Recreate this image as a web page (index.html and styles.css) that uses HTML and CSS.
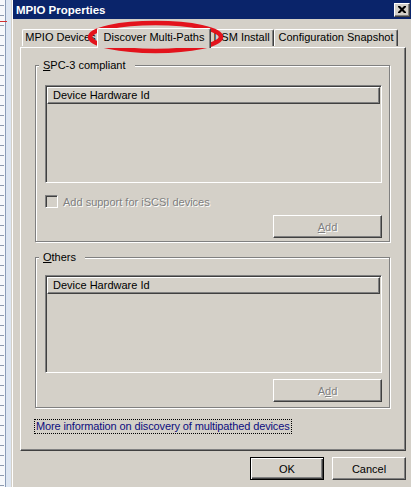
FILE: index.html
```html
<!DOCTYPE html>
<html>
<head>
<meta charset="utf-8">
<title>MPIO Properties</title>
<link rel="stylesheet" href="styles.css">
</head>
<body>
<div class="screen">
  <div class="ruler"><span class="ruler-mark"></span></div>
  <div class="dialog">
    <div class="titlebar">
      <span class="title">MPIO Properties</span>
      <span class="close">
        <svg width="8" height="7" viewBox="0 0 8 7"><path d="M0 0h2l2 2 2-2h2v1l-2.5 2.5L8 6v1H6L4 5 2 7H0V6l2.5-2.5L0 1z" fill="#000"/></svg>
      </span>
    </div>
    <div class="client">
      <div class="tabs">
        <div class="tab t1">MPIO Devices</div>
        <div class="tab t2 selected">Discover Multi-Paths</div>
        <div class="tab t3">DSM Install</div>
        <div class="tab t4">Configuration Snapshot</div>
      </div>
      <div class="panel">
        <fieldset class="group g1">
          <legend><u>S</u>PC-3 compliant</legend>
          <div class="list">
            <div class="list-header">Device Hardware Id</div>
          </div>
          <div class="check-row">
            <span class="checkbox"></span>
            <span class="disabled-text">Add support for iSCSI devices</span>
          </div>
          <div class="btn-row">
            <span class="btn add disabled-text"><u>A</u>dd</span>
          </div>
        </fieldset>
        <fieldset class="group g2">
          <legend><u>O</u>thers</legend>
          <div class="list">
            <div class="list-header">Device Hardware Id</div>
          </div>
          <div class="btn-row">
            <span class="btn add disabled-text">A<u>d</u>d</span>
          </div>
        </fieldset>
        <div class="link-row">
          <span class="link">More information on discovery of multipathed devices</span>
        </div>
      </div>
      <div class="buttons">
        <span class="btn default">OK</span>
        <span class="btn">Cancel</span>
      </div>
    </div>
  </div>
  <svg class="annotation" width="411" height="487" viewBox="0 0 411 487">
    <ellipse cx="155.5" cy="37" rx="65.5" ry="14" fill="none" stroke="#e3131c" stroke-width="4.5"/>
  </svg>
</div>
</body>
</html>
```
FILE: styles.css
```css
html, body {
  margin: 0;
  padding: 0;
  width: 411px;
  height: 487px;
  overflow: hidden;
  background: #d4d0c8;
  font-family: "Liberation Sans", Arial, sans-serif;
  font-size: 11px;
  color: #000;
}

.screen {
  position: relative;
  display: flex;
  width: 411px;
  height: 487px;
  overflow: hidden;
}

.ruler {
  flex: none;
  width: 11px;
  height: 487px;
  position: relative;
  background:
    repeating-linear-gradient(to bottom, transparent 0 5px, #8e9bb0 5px 6px, transparent 6px 10px) 0 0 / 4px 100% no-repeat,
    linear-gradient(#8a9cb8, #8a9cb8) 5px 0 / 1px 100% no-repeat,
    linear-gradient(#dde6f2, #dde6f2) 6px 0 / 5px 100% no-repeat,
    #f6f8fb;
}

.ruler-mark {
  position: absolute;
  left: 0;
  top: 21px;
  width: 7px;
  height: 1px;
  background: #d03030;
}

.dialog {
  flex: none;
  width: 402px;
  height: 487px;
  border-left: 1px solid #d4d0c8;
  box-shadow: inset 1px 0 0 #fff;
  display: flex;
  flex-direction: column;
}

.titlebar {
  flex: none;
  height: 19px;
  margin-left: 1px;
  background: #0a246a;
  display: flex;
  align-items: center;
  justify-content: space-between;
}

.title {
  color: #fff;
  font-weight: bold;
  font-size: 11.5px;
  padding-left: 3px;
}

.close {
  width: 14px;
  height: 12px;
  margin-right: 4px;
  background: #d4d0c8;
  border-top: 1px solid #fff;
  border-left: 1px solid #fff;
  border-right: 1px solid #404040;
  border-bottom: 1px solid #404040;
  box-shadow: inset -1px -1px 0 #808080;
  display: flex;
  align-items: center;
  justify-content: center;
}

.close svg {
  display: block;
}

.client {
  width: 386px;
  margin-left: 8px;
  display: flex;
  flex-direction: column;
}

.tabs {
  display: flex;
  align-items: flex-end;
  height: 18px;
  margin-top: 10px;
  padding-left: 2px;
}

.tab {
  box-sizing: border-box;
  height: 17px;
  margin-bottom: 1px;
  border-top: 1px solid #fff;
  border-left: 1px solid #fff;
  border-right: 1px solid #404040;
  box-shadow: inset -1px 0 0 #808080;
  border-radius: 2px 2px 0 0;
  text-align: center;
  line-height: 15px;
  white-space: nowrap;
  overflow: hidden;
}

.t1 { width: 77px; }
.t2 { width: 114px; }
.t3 { width: 65px; }
.t4 { width: 124px; }

.tab.selected {
  position: relative;
  z-index: 1;
  height: 20px;
  margin: 0 -2px -1px;
  background: #d4d0c8;
  line-height: 17px;
}

.panel {
  box-sizing: border-box;
  width: 386px;
  height: 404px;
  border-top: 1px solid #fff;
  border-left: 1px solid #fff;
  border-right: 1px solid #404040;
  border-bottom: 1px solid #404040;
  box-shadow: inset -1px -1px 0 #808080;
  padding: 11px 0 0 14px;
}

.group {
  box-sizing: border-box;
  width: 355px;
  margin: 0;
  padding: 0 7px 3px 9px;
  border: 1px solid #808080;
  box-shadow: inset 1px 1px 0 #fff, 1px 1px 0 #fff;
  min-width: 0;
}

.group legend {
  margin-left: -6px;
  padding: 0 9px 0 4px;
  line-height: 13px;
  background: #d4d0c8;
}

.g2 {
  margin-top: 9px;
  padding-bottom: 5px;
}

.list {
  box-sizing: border-box;
  height: 98px;
  margin-top: 13px;
  padding: 1px;
  border-top: 1px solid #808080;
  border-left: 1px solid #808080;
  border-right: 1px solid #fff;
  border-bottom: 1px solid #fff;
  box-shadow: inset 1px 1px 0 #404040;
}

.g2 .list {
  margin-top: 11px;
}

.list-header {
  box-sizing: border-box;
  height: 17px;
  border-top: 1px solid #fff;
  border-left: 1px solid #fff;
  border-right: 1px solid #404040;
  border-bottom: 1px solid #404040;
  box-shadow: inset -1px -1px 0 #808080;
  padding-left: 5px;
  line-height: 15px;
}

.check-row {
  display: flex;
  align-items: center;
  margin-top: 12px;
  height: 13px;
}

.checkbox {
  box-sizing: border-box;
  width: 13px;
  height: 13px;
  border-top: 1px solid #808080;
  border-left: 1px solid #808080;
  border-right: 1px solid #fff;
  border-bottom: 1px solid #fff;
  box-shadow: inset 1px 1px 0 #404040;
  background: #d4d0c8;
  margin-right: 5px;
}

.disabled-text {
  color: #808080;
  text-shadow: 1px 1px 0 #fff;
}

.btn-row {
  display: flex;
  justify-content: flex-end;
  margin-top: 7px;
}

.g2 .btn-row {
  margin-top: 6px;
}

.btn {
  box-sizing: border-box;
  display: flex;
  align-items: center;
  justify-content: center;
  width: 74px;
  height: 23px;
  border-top: 1px solid #fff;
  border-left: 1px solid #fff;
  border-right: 1px solid #404040;
  border-bottom: 1px solid #404040;
  box-shadow: inset -1px -1px 0 #808080;
}

.btn.add {
  width: 109px;
}

.btn.default {
  border: 1px solid #000;
  box-shadow: inset 1px 1px 0 #fff, inset -1px -1px 0 #404040, inset -2px -2px 0 #808080;
}

.link-row {
  margin-top: 12px;
}

.link {
  display: inline-block;
  color: #0c0c7e;
  letter-spacing: -0.12px;
  outline: 1px dotted #000;
  outline-offset: 0;
  padding: 0 1px;
  line-height: 13px;
}

.buttons {
  display: flex;
  justify-content: flex-end;
  gap: 8px;
  margin-top: 6px;
}

.annotation {
  position: absolute;
  left: 0;
  top: 0;
  pointer-events: none;
}
```
